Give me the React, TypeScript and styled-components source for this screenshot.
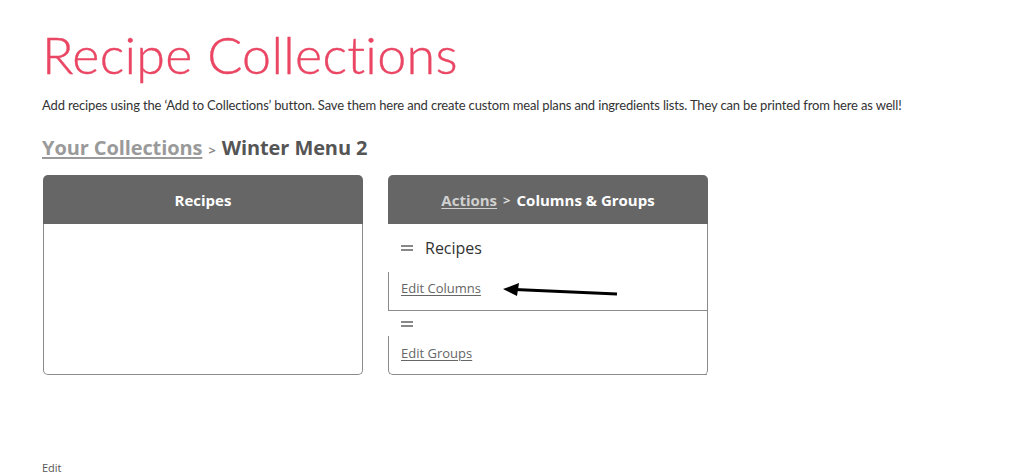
import React from "react";
import styled, { createGlobalStyle } from "styled-components";

const Global = createGlobalStyle`
  html, body { margin: 0; padding: 0; background: #fff; }
  body { font-family: "Lato", "Open Sans", sans-serif; color: #333; }
  * { box-sizing: border-box; }
`;

const Page = styled.div`
  width: 1024px;
  height: 475px;
  padding: 23px 0 0 42px;
  position: relative;
  overflow: hidden;
`;

const Title = styled.h1`
  margin: 0;
  font-family: "Lato", sans-serif;
  font-weight: 300;
  font-size: 52px;
  line-height: 62px;
  color: #ea4664;
  letter-spacing: 0.3px;
  -webkit-text-stroke: 0.4px #ea4664;
`;

const Intro = styled.p`
  margin: 11px 0 0;
  font-family: "Lato", sans-serif;
  font-size: 13px;
  line-height: 18px;
  letter-spacing: -0.15px;
  color: #333;
`;

const Crumbs = styled.div`
  margin-top: 22px;
  font-family: "Open Sans", sans-serif;
  font-weight: 700;
  font-size: 20px;
  line-height: 24px;
  letter-spacing: -0.1px;
  color: #555;
  display: flex;
  align-items: baseline;
  gap: 6px;
`;

const CrumbLink = styled.a`
  color: #9a9a9a;
  text-decoration: underline;
  text-underline-offset: 2px;
`;

const Sep = styled.span<{ $light?: boolean }>`
  font-size: 13px;
  color: ${(p) => (p.$light ? "#ddd" : "#888")};
`;

const Cards = styled.div`
  display: flex;
  gap: 25px;
  margin-top: 13px;
  margin-left: 1px;
`;

const Card = styled.div`
  width: 320px;
  height: 200px;
  display: flex;
  flex-direction: column;
`;

const CardHeader = styled.div`
  height: 49px;
  flex: none;
  background: #666;
  border-radius: 5px 5px 0 0;
  color: #fff;
  font-family: "Open Sans", sans-serif;
  font-weight: 700;
  font-size: 15px;
  display: flex;
  align-items: center;
  justify-content: center;
  gap: 6px;
`;

const HeaderLink = styled.a`
  color: #d0d0d0;
  text-decoration: underline;
  text-underline-offset: 2px;
`;

const PlainBody = styled.div`
  flex: 1;
  border: 1px solid #8a8a8a;
  border-top: none;
  border-radius: 0 0 5px 5px;
`;

const ListBody = styled.div`
  flex: 1;
  border-right: 1px solid #8a8a8a;
  border-radius: 0 0 5px 0;
  display: flex;
  flex-direction: column;
`;

const HandleRow = styled.div<{ $h: number }>`
  display: flex;
  align-items: center;
  gap: 12px;
  padding-left: 13px;
  font-family: "Open Sans", sans-serif;
  font-size: 16px;
  color: #333;
  height: ${(p) => p.$h}px;
`;

const Handle = styled.span`
  width: 12px;
  height: 6px;
  border-top: 2px solid #888;
  border-bottom: 2px solid #888;
  display: inline-block;
`;

const EditBlock = styled.div<{ $last?: boolean }>`
  position: relative;
  border-left: 1px solid #8a8a8a;
  border-bottom: 1px solid #8a8a8a;
  border-radius: ${(p) => (p.$last ? "0 0 0 5px" : "0")};
  padding-left: 12px;
  padding-top: ${(p) => (p.$last ? "6px" : "5px")};
  height: ${(p) => (p.$last ? "auto" : "39px")};
  flex: ${(p) => (p.$last ? "1" : "none")};
`;

const EditLink = styled.a`
  font-family: "Open Sans", sans-serif;
  font-size: 13px;
  line-height: 18px;
  color: #666;
  text-decoration: underline;
  text-underline-offset: 2px;
`;

const Arrow = styled.svg`
  position: absolute;
  left: 114px;
  top: 11px;
`;

const Footer = styled.div`
  position: absolute;
  left: 42px;
  top: 461px;
  font-family: "Open Sans", sans-serif;
  font-size: 11px;
  line-height: 14px;
  color: #555;
`;

export default function App() {
  return (
    <Page>
      <Global />
      <Title>Recipe Collections</Title>
      <Intro>
        Add recipes using the ‘Add to Collections’ button. Save them here and create custom meal plans and
        ingredients lists. They can be printed from here as well!
      </Intro>
      <Crumbs>
        <CrumbLink>Your Collections</CrumbLink>
        <Sep>&gt;</Sep>
        <span>Winter Menu 2</span>
      </Crumbs>
      <Cards>
        <Card>
          <CardHeader>Recipes</CardHeader>
          <PlainBody />
        </Card>
        <Card>
          <CardHeader>
            <HeaderLink>Actions</HeaderLink>
            <Sep $light>&gt;</Sep>
            <span>Columns &amp; Groups</span>
          </CardHeader>
          <ListBody>
            <HandleRow $h={48}>
              <Handle />
              <span>Recipes</span>
            </HandleRow>
            <EditBlock>
              <EditLink>Edit Columns</EditLink>
              <Arrow width="116" height="16" viewBox="0 0 116 16">
                <line x1="12" y1="6.5" x2="114" y2="11" stroke="#000" strokeWidth="3" />
                <polygon points="0,6 16,0 14,13" fill="#000" />
              </Arrow>
            </EditBlock>
            <HandleRow $h={25}>
              <Handle />
            </HandleRow>
            <EditBlock $last>
              <EditLink>Edit Groups</EditLink>
            </EditBlock>
          </ListBody>
        </Card>
      </Cards>
      <Footer>Edit</Footer>
    </Page>
  );
}
